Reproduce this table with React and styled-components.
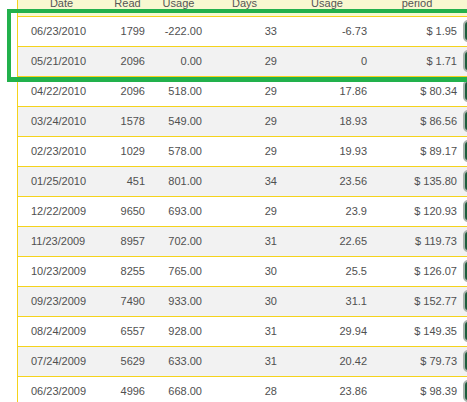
import React from "react";
import styled, { createGlobalStyle } from "styled-components";

const GlobalStyle = createGlobalStyle`
  html, body {
    margin: 0;
    padding: 0;
    background: #fff;
    font-family: "Liberation Sans", Arial, sans-serif;
  }
`;

const Page = styled.div`
  position: relative;
  width: 467px;
  height: 402px;
  overflow: hidden;
  padding-left: 17px;
  box-sizing: border-box;
`;

const Table = styled.div`
  width: 520px;
  margin-top: -14px;
  border-left: 1px solid #f5d31c;
`;

const cols = "87px 45px 57px 75px 90px 90px 1fr";

const HeaderRow = styled.div`
  display: grid;
  grid-template-columns: ${cols};
  height: 30px;
  align-items: end;
  background: #f8f8d0;
  border-bottom: 1px solid #f5d31c;
`;

const HeadCell = styled.div`
  text-align: center;
  font-size: 11px;
  line-height: 13px;
  color: #555;
  padding-bottom: 6px;
`;

const Row = styled.div`
  display: grid;
  grid-template-columns: ${cols};
  height: 29px;
  align-items: center;
  background: ${(p) => (p.$alt ? "#f2f2f2" : "#fff")};
  border-bottom: 1px solid #f5d31c;
`;

const Cell = styled.div`
  font-size: 11px;
  line-height: 13px;
  color: #505050;
  white-space: nowrap;
  text-align: ${(p) => (p.$left ? "left" : "right")};
  padding-left: ${(p) => (p.$left ? "13px" : "0")};
  padding-right: ${(p) => (p.$left ? "0" : "5px")};
`;

const ActionButton = styled.button`
  width: 22px;
  height: 22px;
  margin-left: 1px;
  padding: 0;
  border: 2px solid #a9b3ad;
  border-radius: 5px;
  background: #1e5d3d;
`;

const Highlight = styled.div`
  position: absolute;
  top: 9px;
  left: 7px;
  width: 480px;
  height: 73px;
  box-sizing: border-box;
  border-style: solid;
  border-color: #22b14c;
  border-width: 4px 4px 5px 4px;
  pointer-events: none;
`;

const rows = [
  ["06/23/2010", "1799", "-222.00", "33", "-6.73", "$ 1.95"],
  ["05/21/2010", "2096", "0.00", "29", "0", "$ 1.71"],
  ["04/22/2010", "2096", "518.00", "29", "17.86", "$ 80.34"],
  ["03/24/2010", "1578", "549.00", "29", "18.93", "$ 86.56"],
  ["02/23/2010", "1029", "578.00", "29", "19.93", "$ 89.17"],
  ["01/25/2010", "451", "801.00", "34", "23.56", "$ 135.80"],
  ["12/22/2009", "9650", "693.00", "29", "23.9", "$ 120.93"],
  ["11/23/2009", "8957", "702.00", "31", "22.65", "$ 119.73"],
  ["10/23/2009", "8255", "765.00", "30", "25.5", "$ 126.07"],
  ["09/23/2009", "7490", "933.00", "30", "31.1", "$ 152.77"],
  ["08/24/2009", "6557", "928.00", "31", "29.94", "$ 149.35"],
  ["07/24/2009", "5629", "633.00", "31", "20.42", "$ 79.73"],
  ["06/23/2009", "4996", "668.00", "28", "23.86", "$ 98.39"],
];

export default function App() {
  return (
    <Page>
      <GlobalStyle />
      <Table>
        <HeaderRow>
          <HeadCell>Date</HeadCell>
          <HeadCell>Read</HeadCell>
          <HeadCell>Usage</HeadCell>
          <HeadCell>Days</HeadCell>
          <HeadCell>Usage</HeadCell>
          <HeadCell>period</HeadCell>
          <HeadCell />
        </HeaderRow>
        {rows.map((r, i) => (
          <Row key={i} $alt={i % 2 === 1}>
            <Cell $left>{r[0]}</Cell>
            <Cell>{r[1]}</Cell>
            <Cell>{r[2]}</Cell>
            <Cell>{r[3]}</Cell>
            <Cell>{r[4]}</Cell>
            <Cell>{r[5]}</Cell>
            <div>
              <ActionButton />
            </div>
          </Row>
        ))}
      </Table>
      <Highlight />
    </Page>
  );
}
